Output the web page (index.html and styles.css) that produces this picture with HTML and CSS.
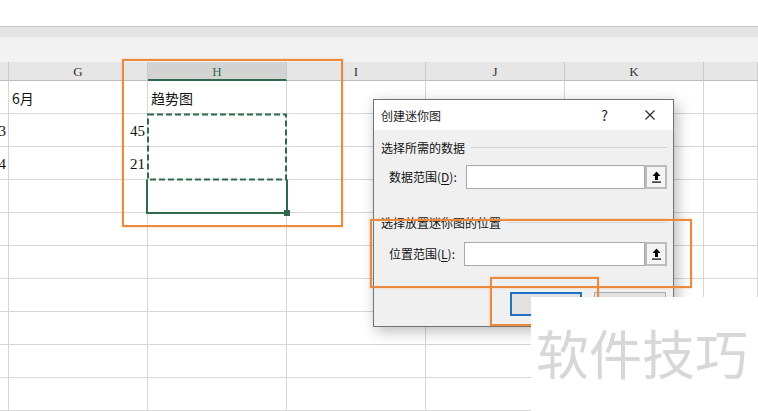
FILE: index.html
```html
<!DOCTYPE html>
<html lang="zh-CN">
<head>
<meta charset="utf-8">
<title>创建迷你图</title>
<link rel="stylesheet" href="styles.css">
</head>
<body>
<div class="screen">
  <div class="ribbon-top"></div>
  <div class="ribbon-band"></div>
  <div class="formula-band"></div>

  <div class="sheet">
    <div class="c hd"></div><div class="c hd">G</div><div class="c hd sel">H</div><div class="c hd">I</div><div class="c hd">J</div><div class="c hd">K</div><div class="c hd"></div>

    <div class="c"></div><div class="c txt">6月</div><div class="c txt">趋势图</div><div class="c"></div><div class="c"></div><div class="c"></div><div class="c"></div>
    <div class="c num">3</div><div class="c num">45</div><div class="c"></div><div class="c"></div><div class="c"></div><div class="c"></div><div class="c"></div>
    <div class="c num">4</div><div class="c num">21</div><div class="c"></div><div class="c"></div><div class="c"></div><div class="c"></div><div class="c"></div>
    <div class="c"></div><div class="c"></div><div class="c"></div><div class="c"></div><div class="c"></div><div class="c"></div><div class="c"></div>
    <div class="c"></div><div class="c"></div><div class="c"></div><div class="c"></div><div class="c"></div><div class="c"></div><div class="c"></div>
    <div class="c"></div><div class="c"></div><div class="c"></div><div class="c"></div><div class="c"></div><div class="c"></div><div class="c"></div>
    <div class="c"></div><div class="c"></div><div class="c"></div><div class="c"></div><div class="c"></div><div class="c"></div><div class="c"></div>
    <div class="c"></div><div class="c"></div><div class="c"></div><div class="c"></div><div class="c"></div><div class="c"></div><div class="c"></div>
    <div class="c"></div><div class="c"></div><div class="c"></div><div class="c"></div><div class="c"></div><div class="c"></div><div class="c"></div>
    <div class="c"></div><div class="c"></div><div class="c"></div><div class="c"></div><div class="c"></div><div class="c"></div><div class="c"></div>

    <svg class="selection" width="758" height="349" viewBox="0 0 758 349">
      <rect x="148" y="52.5" width="138" height="65" fill="none" stroke="#2f6b4a" stroke-width="2" stroke-dasharray="6 3"/>
      <path d="M147 117.5 V151 H287 V117.5" fill="none" stroke="#2f6b4a" stroke-width="2"/>
      <rect x="284" y="148" width="6" height="6" fill="#2f6b4a"/>
    </svg>
  </div>

  <div class="callout callout-range"></div>

  <div class="dialog">
    <div class="dlg-title">
      <span class="dlg-name">创建迷你图</span>
      <span class="dlg-help">?</span>
      <svg class="dlg-close" width="10" height="10" viewBox="0 0 10 10"><path d="M0.5 0.5 L9.5 9.5 M9.5 0.5 L0.5 9.5" stroke="#222" stroke-width="1.1" fill="none"/></svg>
    </div>
    <div class="dlg-body">
      <div class="group-head"><span>选择所需的数据</span><i class="rule"></i></div>
      <div class="field">
        <span class="field-label">数据范围(<u>D</u>):</span>
        <span class="field-input"></span>
        <span class="picker"><svg width="9" height="12" viewBox="0 0 9 12"><path d="M4.5 0.5 L8.5 5 H6 V9 H3 V5 H0.5 Z" fill="#000"/><rect x="0" y="10.5" width="9" height="1.2" fill="#000"/></svg></span>
      </div>
      <div class="group-head group-gap"><span>选择放置迷你图的位置</span><i class="rule"></i></div>
      <div class="field field-gap">
        <span class="field-label">位置范围(<u>L</u>):</span>
        <span class="field-input"></span>
        <span class="picker"><svg width="9" height="12" viewBox="0 0 9 12"><path d="M4.5 0.5 L8.5 5 H6 V9 H3 V5 H0.5 Z" fill="#000"/><rect x="0" y="10.5" width="9" height="1.2" fill="#000"/></svg></span>
      </div>
      <div class="actions">
        <span class="btn btn-default"></span>
        <span class="btn"></span>
      </div>
    </div>
  </div>

  <div class="callout callout-location"></div>
  <div class="callout callout-ok"></div>

  <div class="watermark">软件技巧</div>
</div>
</body>
</html>
```

FILE: styles.css
```css
html, body {
  margin: 0;
  padding: 0;
  background: #ffffff;
  overflow: hidden;
}

.screen {
  position: relative;
  width: 758px;
  height: 411px;
  overflow: hidden;
  font-family: "Liberation Serif", "Noto Sans CJK SC", serif;
}

.ribbon-top {
  height: 26px;
  background: #ffffff;
  border-bottom: 1px solid #c9c9c9;
}

.ribbon-band {
  height: 10px;
  background: #e4e4e4;
}

.formula-band {
  height: 25px;
  background: #f2f2f2;
}

.sheet {
  position: relative;
  display: grid;
  grid-template-columns: 9px repeat(5, 139px) 1fr;
  grid-template-rows: 19px repeat(10, 33px);
  background: #ffffff;
}

.c {
  box-sizing: border-box;
  border-right: 1px solid #d6d6d6;
  border-bottom: 1px solid #d6d6d6;
  display: flex;
  align-items: flex-end;
  white-space: nowrap;
  font-size: 14px;
  line-height: 16px;
  color: #111;
  padding-bottom: 7px;
}

.hd {
  background: #e6e6e6;
  border-right-color: #cacaca;
  border-bottom-color: #bdbdbd;
  justify-content: center;
  align-items: center;
  padding: 2px 0 0 0;
  font-size: 13px;
  color: #333;
}

.hd.sel {
  background: #d3d3d3;
  border-bottom: 2px solid #2f6b4a;
  color: #2f6b4a;
}

.txt {
  padding-left: 3px;
  font-family: "Noto Sans CJK SC", sans-serif;
  font-size: 14px;
}

.num {
  justify-content: flex-end;
  padding-right: 2px;
  font-size: 15px;
}

.selection {
  position: absolute;
  left: 0;
  top: 0;
  pointer-events: none;
}

.callout {
  position: absolute;
  box-sizing: border-box;
  border: 2px solid #e98a3f;
  box-shadow: 0 0 2px rgba(233, 138, 63, 0.45);
  pointer-events: none;
}

.callout-range {
  left: 122px;
  top: 59px;
  width: 221px;
  height: 168px;
}

.callout-location {
  left: 370px;
  top: 219px;
  width: 322px;
  height: 69px;
}

.callout-ok {
  left: 490px;
  top: 277px;
  width: 109px;
  height: 49px;
}

.dialog {
  position: absolute;
  left: 373px;
  top: 99px;
  width: 301px;
  height: 228px;
  box-sizing: border-box;
  border: 1px solid #727272;
  background: #f0f0f0;
  box-shadow: 3px 4px 14px rgba(0, 0, 0, 0.28);
  font-family: "Noto Sans CJK SC", sans-serif;
  font-size: 12px;
  color: #111;
  display: flex;
  flex-direction: column;
}

.dlg-title {
  height: 30px;
  background: #ffffff;
  display: flex;
  align-items: center;
  padding-left: 7px;
  padding-right: 18px;
}

.dlg-name {
  flex: 1;
  font-size: 12px;
  color: #222;
}

.dlg-help {
  font-size: 14px;
  color: #222;
  margin-right: 37px;
  margin-top: -1px;
}

.dlg-close {
  display: block;
  margin-top: -1px;
}

.dlg-body {
  display: flex;
  flex-direction: column;
  padding: 9px 6px 0 7px;
}

.group-head {
  height: 18px;
  display: flex;
  align-items: center;
  line-height: 18px;
}

.group-head .rule {
  flex: 1;
  height: 1px;
  background: #d4d4d4;
  margin-left: 6px;
  margin-top: -1px;
}

.group-gap {
  margin-top: 25px;
}

.field {
  display: flex;
  align-items: center;
  height: 24px;
  margin-top: 8px;
  padding-left: 8px;
}

.field-gap {
  margin-top: 10px;
}

.field-label {
  margin-right: 9px;
  line-height: 18px;
}

.field-label u {
  text-underline-offset: 2px;
}

.field-input {
  flex: 1;
  height: 24px;
  box-sizing: border-box;
  background: #ffffff;
  border: 1px solid #aaaaaa;
}

.picker {
  width: 22px;
  height: 24px;
  box-sizing: border-box;
  border: 2px solid #bcbcbc;
  background: #f4f4f4;
  display: flex;
  align-items: center;
  justify-content: center;
}

.picker svg {
  display: block;
}

.actions {
  display: flex;
  justify-content: flex-end;
  gap: 12px;
  margin-top: 26px;
  padding-right: 1px;
}

.btn {
  width: 72px;
  height: 24px;
  box-sizing: border-box;
  border: 1px solid #adadad;
  background: #e1e1e1;
}

.btn-default {
  border: 2px solid #1f71c2;
}

.watermark {
  position: absolute;
  left: 531px;
  top: 297px;
  right: 0;
  bottom: 0;
  background: #ffffff;
  padding: 26px 0 0 5px;
  font-family: "Noto Sans CJK SC", sans-serif;
  font-size: 53px;
  line-height: 58px;
  color: #d7d7d7;
  white-space: nowrap;
}
```
